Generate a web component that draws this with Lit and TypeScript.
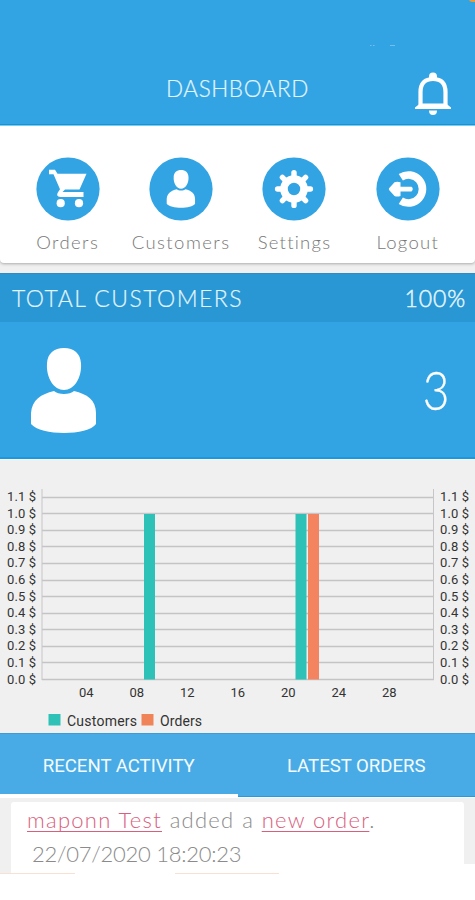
import { LitElement, html, svg, css } from "lit";
import { customElement } from "lit/decorators.js";

const person = svg`
  <path d="M33 0C43 0 49.500 5.500 50 15.500C51 30 43 42 33 42C23 42 15 30 16 15.500C16.500 5.500 23 0 33 0Z"/>
  <path d="M23 43C27 47 39 47 43 43C56 46 65 52 65 65V76C61 82 47 85 33 85C19 85 5 82 0 76V65C1 52 10 46 23 43Z"/>`;

const cart = svg`
  <path d="M49 45H55L58 49H86.500L79 65H63.500L61 69H83V73.500H60C56.500 73.500 56 71 57.500 68L59.500 64L53.500 49.500H49Z"/>
  <circle cx="60.500" cy="79" r="4"/><circle cx="79" cy="79" r="4"/>`;

const teeth = [0, 45, 90, 135, 180, 225, 270, 315];

// Glyphs are drawn in a 64-unit box centred on the disc.
const icons = {
  cart: svg`<g transform="translate(-36 -32.300)" fill="#fff">
      <path d="M49 45H55L57.500 49H86.500L79.500 64.800H65L62.500 67.300H83.500V72.200H60.500C57 72.200 56.500 70 58 67.500L60 64.500L53.500 49.500H49Z"/>
      <circle cx="60.700" cy="78.500" r="4.100"/><circle cx="79" cy="78.500" r="4.100"/>
    </g>`,
  person: svg`<g transform="translate(17.700 13) scale(.436 .445)" fill="#fff">${person}</g>`,
  gear: svg`<g transform="translate(32 32)" fill="none" stroke="#fff">
      <circle r="10" stroke-width="7.600"/>
      ${teeth.map((a) => svg`<path transform="rotate(${a})" d="M0 -13V-16.400" stroke-width="5.400" stroke-linecap="round"/>`)}
    </g>`,
  logout: svg`<path d="M24.800 20.300A14 14 0 1 1 24.800 43.700" fill="none" stroke="#fff" stroke-width="7.600"/>
    <path d="M13.300 31L18.500 25.200Q21 24.200 24.500 25.200V29.800H35.500Q38 32 35.500 34.400H24.500V39Q21 40 18.500 39L13.300 33.200Q12.300 32 13.300 31Z" fill="#fff"/>`,
};

@customElement("app-root")
export class AppRoot extends LitElement {
  static styles = css`
    :host { display: block; width: 475px; height: 900px; overflow: hidden; background: #fff; font-family: Lato, "Liberation Sans", sans-serif; font-weight: 300; }
    * { box-sizing: border-box; }
    svg { display: block; }
    .top { position: relative; height: 126px; background: #33a4e3; border-bottom: 1px solid #74cff7; box-shadow: inset 0 -1px #1b91d2; display: grid; grid-template-columns: 1fr 156px 1fr; padding-top: 71px; color: #e2f5fd; }
    .top h1 { grid-column: 2; justify-self: center; margin: 0; font-size: 22.500px; line-height: 36px; font-weight: 300; letter-spacing: .6px; white-space: nowrap; -webkit-text-stroke: .2px; }
    .bell { justify-self: end; margin-right: 23px; }
    .corner { position: absolute; right: -3px; top: -4px; width: 9px; height: 6px; border-radius: 50%; background: #e69b3c; }
    .specks { position: absolute; left: 369px; top: 44px; }
    .page { background: #f0f0f0; height: 747px; }
    .menu { height: 137px; background: #fff; border-radius: 0 0 4px 4px; box-shadow: 0 1px 3px #aaa; display: grid; grid-template-columns: repeat(4, 113.400px); padding: 31px 0 0 11px; }
    .item { display: flex; flex-direction: column; align-items: center; color: #777; font-size: 18.500px; line-height: 24px; font-weight: 300; gap: 9px; white-space: nowrap; }
    .orders { letter-spacing: 1.400px; }
    .customers { letter-spacing: 1.450px; }
    .settings { letter-spacing: 1.250px; }
    .logout { letter-spacing: 1.300px; }
    .total { margin-top: 10px; height: 186px; color: #e2f5fd; background: #33a4e3; border-top: 1px solid #3289c4; border-bottom: 2px solid #1c98dc; }
    .bar { height: 48px; background: #2897d4; padding: 0 9px 0 12px; display: flex; justify-content: space-between; align-items: center; font-size: 23px; line-height: 48px; letter-spacing: 1.450px; -webkit-text-stroke: .2px; }
    .pct { letter-spacing: .9px; -webkit-text-stroke: .5px; }
    .body { height: 135px; display: flex; justify-content: space-between; align-items: center; padding: 2px 26px 0 31px; }
    .num { font-size: 54px; line-height: 54px; color: #fff; transform: scaleX(.85) translateY(-1px); transform-origin: 100% 50%; -webkit-text-stroke: .3px; }
    .chart { height: 274px; border-top: 1px solid #f8fbfc; font: 400 13px Roboto, sans-serif; }
    .tabs { height: 64px; position: relative; display: grid; grid-template-columns: 1fr 1fr; background: #49abe5; border-top: 1px solid #3b9cd7; border-bottom: 1px solid #279ad9; color: #f4fbff; font: 400 18.600px/63px Roboto, sans-serif; text-align: center; padding-top: 1px; }
    .tabs::after { content: ""; position: absolute; left: 0; bottom: -1px; width: 238px; height: 3px; background: #fff; }
    .tab { white-space: nowrap; }
    .feed { height: 76px; border-top: 1px solid #fff; display: flex; padding: 4px 11px 0; position: relative; }
    .feed::after { content: ""; position: absolute; right: 0; bottom: 0; width: 11px; height: 9px; background: #fff; }
    .card { flex: 1; background: #fff; border-radius: 3px 3px 0 0; padding: 2px 16px; color: #8b8b8b; white-space: nowrap; }
    .line { font-size: 22px; letter-spacing: 1.270px; line-height: 32px; word-spacing: .4px; }
    .date { font-size: 22px; letter-spacing: -.27px; padding-left: 5px; line-height: 35px; }
    .link { color: #d9607d; text-decoration: underline; text-decoration-thickness: 1px; text-underline-offset: 3px; text-decoration-skip-ink: none; }
    .foot { height: 27px; background: #fff; display: flex; gap: 100px; }
    .rule { height: 1px; width: 75px; background: #fae0d2; }
    .wide { width: 104px; }
  `;

  private chart() {
    const rows = Array.from({ length: 12 }, (_, i) => ({ y: 219.500 - i * 16.58, label: (i / 10).toFixed(1) + " $" }));
    const days = ["04", "08", "12", "16", "20", "24", "28"];
    return html`<svg width="475" height="273" viewBox="0 0 475 273" fill="#333">
      ${rows.map((r) => svg`
        <path d="M42 ${Math.floor(r.y) + 0.5}H434" stroke="#c4c4c6" stroke-width="1.300"/>
        <text x="7" y="${r.y + 4}" textLength="29">${r.label}</text>
        <text x="440" y="${r.y + 4}" textLength="29">${r.label}</text>`)}
      <path d="M42 29V220M433.500 29V220" stroke="#c6c6c8" fill="none"/>
      <rect x="144" y="54" width="11" height="165.500" fill="#2dc1b8"/>
      <rect x="295.500" y="54" width="11" height="165.500" fill="#2dc1b8"/>
      <rect x="308" y="54" width="11" height="165.500" fill="#f4845f"/>
      ${days.map((d, i) => svg`<text x="${86.3 + i * 50.5}" y="237" text-anchor="middle">${d}</text>`)}
      <rect x="48.500" y="254" width="12" height="11.500" fill="#2dc1b8"/>
      <text x="67" y="265.500" font-size="14" textLength="70">Customers</text>
      <rect x="141.500" y="254" width="12" height="11.500" fill="#f08358"/>
      <text x="160" y="265.500" font-size="14" textLength="42">Orders</text>
    </svg>`;
  }

  private item(name: string, icon: unknown) {
    return html`<div class="item ${name.toLowerCase()}">
      <svg width="64" height="64" viewBox="0 0 64 64"><circle cx="32" cy="32" r="31.600" fill="#33a4e3"/>${icon}</svg>
      <span>${name}</span>
    </div>`;
  }

  render() {
    return html`
      <header class="top">
        <h1>DASHBOARD</h1>
        <svg class="bell" width="38" height="46" viewBox="0 0 38 46">
          <path d="M6.500 34.500V21C6.500 12 11 8 19 8S31.500 12 31.500 21V34.500" fill="none" stroke="#fff" stroke-width="4.200"/>
          <path d="M1 36.500L6 32.500H32L37 36.500V38H1Z" fill="#fff"/>
          <path d="M15 8.500V5.500Q15 1.500 19 1.500T23 5.500V8.500ZM15 39.500H23Q23 44 19 44T15 39.500Z" fill="#fff"/>
        </svg>
        <svg class="specks" width="28" height="4"><path d="M1 1.500H2.500M4 1.500H5.500M21 1.500H26" stroke="#72bfeb" stroke-width="1"/></svg>
        <i class="corner"></i>
      </header>
      <main class="page">
        <nav class="menu">
          ${this.item("Orders", icons.cart)}
          ${this.item("Customers", icons.person)}
          ${this.item("Settings", icons.gear)}
          ${this.item("Logout", icons.logout)}
        </nav>
        <section class="total">
          <div class="bar"><span>TOTAL CUSTOMERS</span><span class="pct">100%</span></div>
          <div class="body">
            <svg width="66" height="86" viewBox="0 0 66 86" fill="#fff">${person}</svg>
            <span class="num">3</span>
          </div>
        </section>
        <section class="chart">${this.chart()}</section>
        <div class="tabs"><span class="tab">RECENT ACTIVITY</span><span class="tab">LATEST ORDERS</span></div>
        <section class="feed">
          <div class="card">
            <div class="line"><span class="link">maponn Test</span> added a <span class="link">new order</span>.</div>
            <div class="date">22/07/2020 18:20:23</div>
          </div>
        </section>
      </main>
      <footer class="foot"><i class="rule"></i><i class="rule wide"></i></footer>
    `;
  }
}
